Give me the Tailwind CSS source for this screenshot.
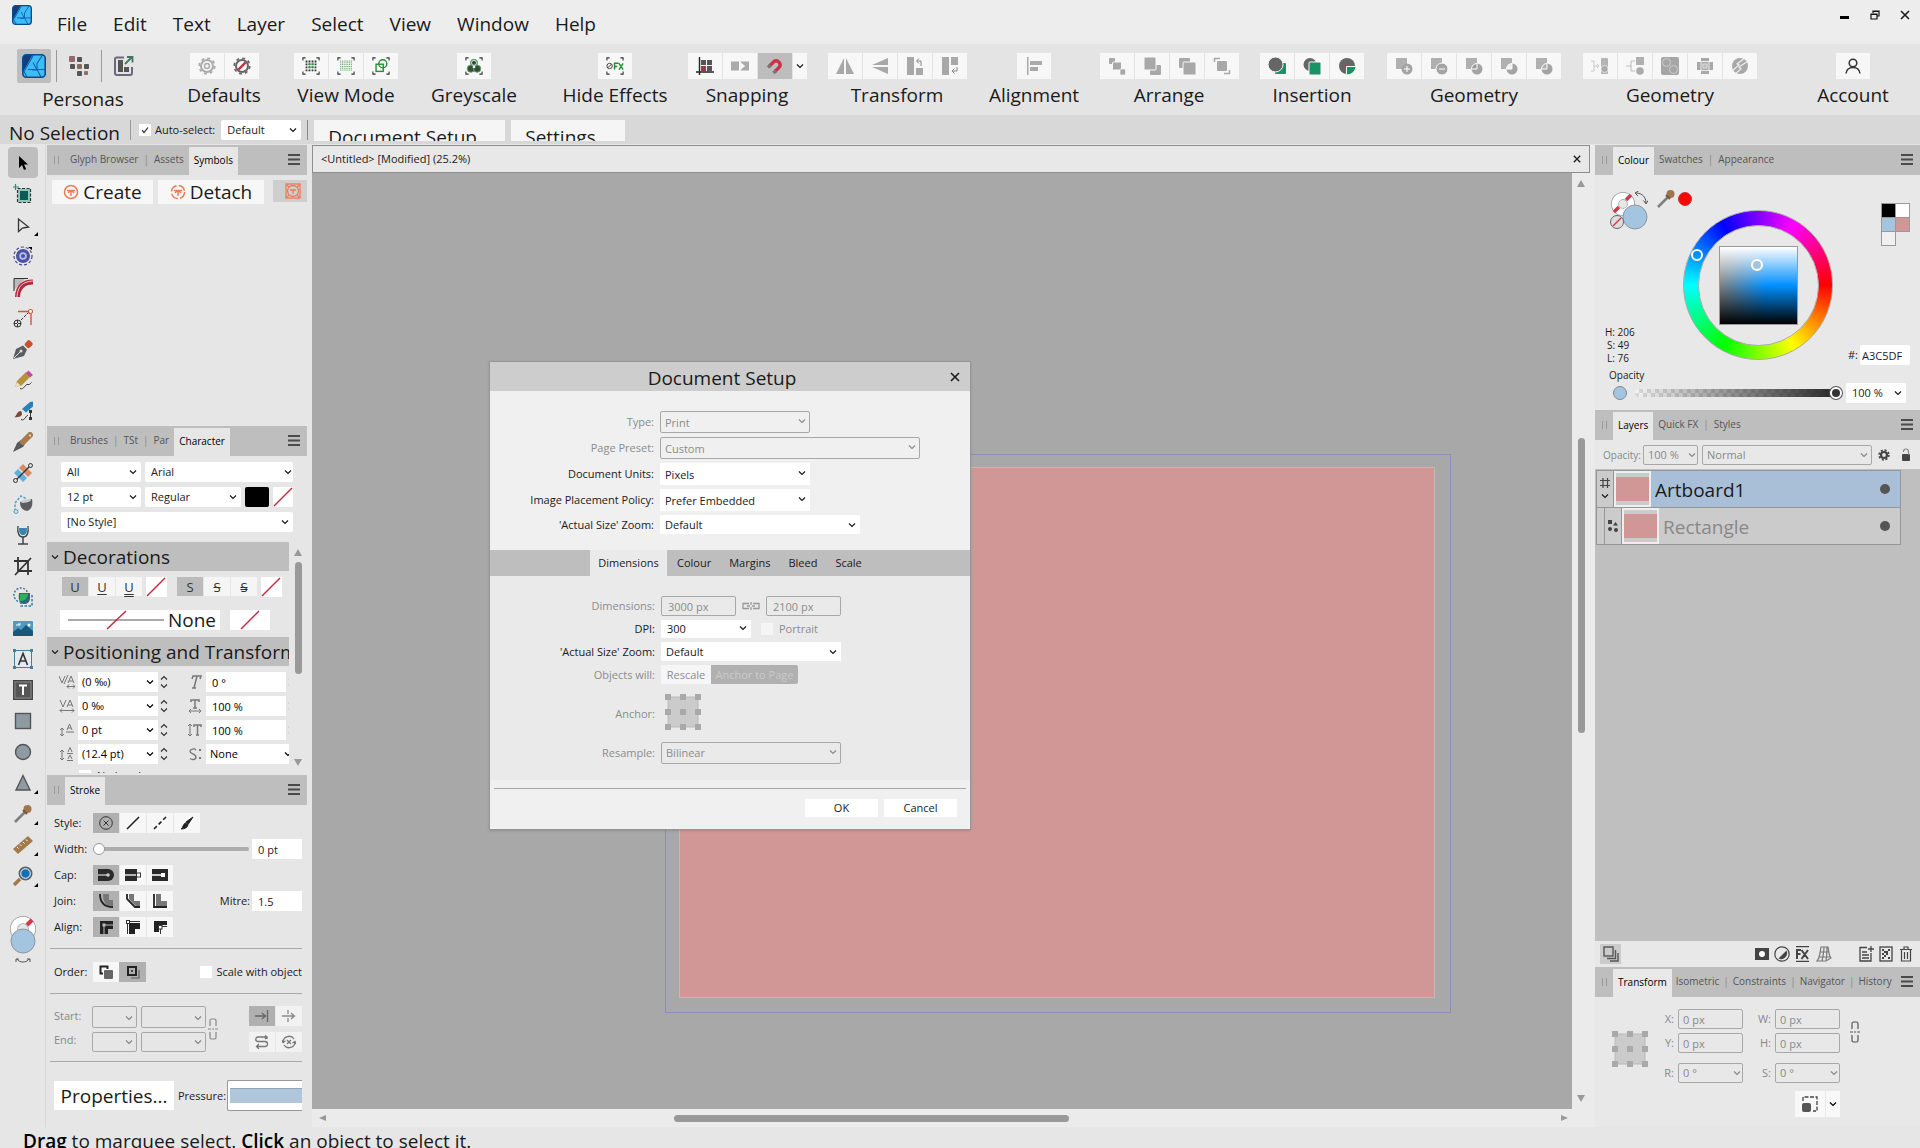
<!DOCTYPE html>
<html lang="en">
<head>
  <meta charset="UTF-8">
  <meta name="viewport" content="width=device-width, initial-scale=1.0">
  <title>Untitled - Designer</title>
  <script src="https://cdn.jsdelivr.net/npm/@tailwindcss/browser@4"></script>
</head>
<body class="h-screen flex flex-col overflow-hidden bg-[#e6e6e6] text-[#1a1a1a] text-[11px] leading-4 whitespace-nowrap font-['Open_Sans','Noto_Sans',sans-serif]">

  <!-- Shared symbols -->
  <svg class="hidden">
    <symbol id="chev" viewBox="0 0 8 8"><path d="M1 2.500l3 3 3-3" fill="none" stroke="currentColor" stroke-width="1.200"/></symbol>
    <symbol id="menu" viewBox="0 0 12 11"><path d="M0 1h12M0 5.500h12M0 10h12" stroke="#4a4a4a" stroke-width="2"/></symbol>
    <symbol id="grip" viewBox="0 0 5 8"><path d="M.5 0v8M4.500 0v8" stroke="#999"/></symbol>
    <symbol id="slash" viewBox="0 0 20 20"><path d="M1 19L19 1" stroke="#c8283c" stroke-width="1.500"/></symbol>
    <symbol id="x" viewBox="0 0 10 10"><path d="M1 1l8 8M9 1L1 9" stroke="currentColor" stroke-width="1.600"/></symbol>
    <symbol id="logo" viewBox="0 0 24 24">
      <rect x=".8" y=".8" width="22.400" height="22.400" rx="3.500" fill="#3dbdf7"/>
      <path d="M1 4a3 3 0 0 1 3-3h6.500L1 18z" fill="#123f7c"/>
      <path d="M11.500 1L2 17.500 5 23M6 15.500h17M11 8.500l4 7.500-5 0M15 15.500V9.500L20.500 1M15 15.500L19 23" fill="none" stroke="#1263ad" stroke-width="1.100"/>
      <rect x=".8" y=".8" width="22.400" height="22.400" rx="3.500" fill="none" stroke="#0b4c90" stroke-width="1.600"/>
    </symbol>
    <symbol id="anchor" viewBox="0 0 36 36">
      <rect x="3" y="3" width="30" height="30" fill="#cbcbcb" stroke="#b9b9b9"/>
      <path d="M0 0h6v6H0zM15 0h6v6h-6zM30 0h6v6h-6zM0 15h6v6H0zM15 15h6v6h-6zM30 15h6v6h-6zM0 30h6v6H0zM15 30h6v6h-6zM30 30h6v6h-6z" fill="#a9a9a9"/>
    </symbol>
    <symbol id="link" viewBox="0 0 10 22"><path d="M2 8V2.500Q2 1 3.500 1h3Q8 1 8 2.500V8M2 14v5.500Q2 21 3.500 21h3Q8 21 8 19.500V14M0 11h3M4 11h2M7 11h3" fill="none" stroke="currentColor" stroke-width="1.200"/></symbol>
    <symbol id="spin" viewBox="0 0 8 14"><path d="M1 4.500l3-3 3 3M1 9.500l3 3 3-3" fill="none" stroke="#333" stroke-width="1.200"/></symbol>
    <symbol id="frame" viewBox="0 0 20 20"><path d="M1 4V1h3M16 1h3v3M19 16v3h-3M4 19H1v-3" fill="none" stroke="#333" stroke-width="1.200"/></symbol>
    <symbol id="dropper" viewBox="0 0 20 20"><path d="M2 18L12 8" stroke="#7d8084" stroke-width="2.600"/><circle cx="14.500" cy="5" r="4" fill="#a0744c"/><path d="M10 6l4 4" stroke="#7b5535" stroke-width="2"/></symbol>
  </svg>

  <!-- Menu bar -->
  <header class="h-11 shrink-0 bg-[#ededed] flex items-start">
    <svg class="size-5 ml-3 mt-[5px]"><use href="#logo"/></svg>
    <nav class="flex ml-[25px] mt-2.5 gap-[26px] text-[19px] leading-7">
      <a href="#file">File</a><a href="#edit">Edit</a><a href="#text">Text</a><a href="#layer">Layer</a><a href="#select">Select</a><a href="#view">View</a><a href="#window">Window</a><a href="#help">Help</a>
    </nav>
    <div class="ml-auto mr-2.5 mt-2.5 flex gap-5">
      <button aria-label="Minimise"><svg class="size-2.5" viewBox="0 0 10 10"><path d="M0 6h9v3H0z"/></svg></button>
      <button aria-label="Restore"><svg class="size-2.5" viewBox="0 0 10 10"><path d="M3 3V1h6v5H7M3 1.500h6M1 4h6v5H1zM1 4.500h6" fill="none" stroke="#111" stroke-width="1.200"/></svg></button>
      <button aria-label="Close"><svg class="size-2.5"><use href="#x"/></svg></button>
    </div>
  </header>

  <!-- Toolbar -->
  <div class="h-[71px] shrink-0 pt-[5px] flex bg-[#e4e4e4] text-[19px] leading-8">
    <section class="w-[166px] flex flex-col items-center">
      <div class="flex items-center h-[34px] gap-[5px] -ml-2">
        <button class="size-[34px] bg-[#bdbdbd] rounded-xs flex items-center justify-center"><svg class="size-6"><use href="#logo"/></svg></button>
        <span class="w-px h-8 bg-[#999]"></span>
        <button class="px-[7px]"><svg class="size-5" viewBox="0 0 20 20"><g fill="#555"><rect x="8" y="1" width="5" height="5" rx="1"/><rect x="1" y="8" width="5" height="5" rx="1"/><rect x="15" y="8" width="5" height="5" rx="1"/><rect x="8" y="15" width="5" height="5" rx="1"/></g><rect x="0" y="0" width="6" height="6" rx="1" fill="#95696b"/><rect x="8" y="8" width="5" height="5" rx="1" fill="#8a6a58"/><rect x="15" y="15" width="4" height="4" rx="1" fill="#8a7460"/></svg></button>
        <span class="w-px h-8 bg-[#999]"></span>
        <button class="px-[7px]"><svg class="size-5" viewBox="0 0 20 20"><path d="M10 1.500H3A2 2 0 0 0 1 4v13a2 2 0 0 0 2 2h13a2 2 0 0 0 2-2v-6" fill="none" stroke="#6b6780" stroke-width="2"/><path d="M4 4h5v12H4zM10 11h5v5h-5z" fill="#555"/><path d="M11 8l7-7M13 1h5.500v5.500" stroke="#3f7561" fill="none" stroke-width="1.800"/></svg></button>
      </div>
      <span>Personas</span>
    </section>

    <section class="w-[116px] flex flex-col items-center pt-1">
      <div class="flex gap-px">
        <button class="w-[34px] h-[26px] bg-[#f7f7f7] flex items-center justify-center"><svg class="size-[18px]" viewBox="0 0 18 18"><circle cx="9" cy="9" r="6" fill="none" stroke="#aaa" stroke-width="2"/><circle cx="9" cy="9" r="2.500" fill="none" stroke="#aaa" stroke-width="1.500"/><circle cx="9" cy="9" r="7.800" fill="none" stroke="#aaa" stroke-width="1.600" stroke-dasharray="3 3.120"/></svg></button>
        <button class="w-[34px] h-[26px] bg-[#f7f7f7] flex items-center justify-center"><svg class="size-[18px]" viewBox="0 0 18 18"><circle cx="9" cy="9" r="6" fill="none" stroke="#666" stroke-width="2"/><circle cx="9" cy="9" r="7.800" fill="none" stroke="#666" stroke-width="1.600" stroke-dasharray="3 3.120"/><path d="M5.500 12.500l7-7" stroke="#c8283c" stroke-width="2.400"/></svg></button>
      </div>
      <span>Defaults</span>
    </section>

    <section class="w-32 flex flex-col items-center pt-1">
      <div class="flex gap-px">
        <button class="w-[34px] h-[26px] bg-[#f7f7f7] flex items-center justify-center"><svg class="size-[18px]" viewBox="0 0 20 20"><use href="#frame"/><path d="M5 4v12M8.300 4v12M11.700 4v12M15 4v12" stroke="#333" stroke-width="2" stroke-dasharray="2 1.300"/><path d="M8.300 7v6M11.700 7v6" stroke="#2e9b3a" stroke-width="2" stroke-dasharray="2 1.300"/></svg></button>
        <button class="w-[34px] h-[26px] bg-[#f7f7f7] flex items-center justify-center"><svg class="size-[18px]" viewBox="0 0 20 20"><use href="#frame"/><path d="M4 4v12M6 4v12M8 4v12M10 4v12M12 4v12M14 4v12M16 4v12" stroke="#3d8a47" stroke-dasharray="1 1"/></svg></button>
        <button class="w-[34px] h-[26px] bg-[#f7f7f7] flex items-center justify-center"><svg class="size-[18px]" viewBox="0 0 20 20"><use href="#frame"/><rect x="4.500" y="8" width="8" height="8" fill="none" stroke="#1f8f2c" stroke-width="1.500"/><circle cx="12" cy="7.500" r="4.500" fill="none" stroke="#1f8f2c" stroke-width="1.500"/></svg></button>
      </div>
      <span>View Mode</span>
    </section>

    <section class="w-32 flex flex-col items-center pt-1">
      <button class="w-[34px] h-[26px] bg-[#f7f7f7] flex items-center justify-center"><svg class="size-[18px]" viewBox="0 0 20 20"><use href="#frame"/><g fill="#3a4a3c" stroke="#4fae58"><circle cx="10" cy="6.500" r="4"/><circle cx="6.500" cy="13" r="4"/><circle cx="13.500" cy="13" r="4"/></g><circle cx="10" cy="6.500" r="2.800" fill="none" stroke="#dfe"/><circle cx="10" cy="11" r="1.500" fill="#dfe"/></svg></button>
      <span>Greyscale</span>
    </section>

    <section class="w-[154px] flex flex-col items-center pt-1">
      <button class="w-[34px] h-[26px] bg-[#f7f7f7] flex items-center justify-center"><svg class="size-[18px]" viewBox="0 0 20 20"><use href="#frame"/><circle cx="4" cy="10" r="3" fill="none" stroke="#333"/><path d="M2 12l4-4" stroke="#333"/><path d="M9.500 14V7H14M9.500 10.500h3M14.500 7l4.500 7M19 7l-4.500 7" fill="none" stroke="#1f8f2c" stroke-width="1.600"/></svg></button>
      <span>Hide Effects</span>
    </section>

    <section class="w-[110px] flex flex-col items-center pt-1">
      <div class="flex gap-px">
        <button class="w-[34px] h-[26px] bg-[#f7f7f7] flex items-center justify-center"><svg class="size-[18px]" viewBox="0 0 18 18"><path d="M5 3h5v5H5zM11 3h5v5h-5zM11 9h5v5h-5z" fill="#555"/><path d="M5 9h5v5H5z" fill="#9a3a44"/><path d="M3.500 0v18M0 15h18" stroke="#222" stroke-width="1.400"/></svg></button>
        <button class="w-[34px] h-[26px] bg-[#f7f7f7] flex items-center justify-center"><svg class="size-[18px]" viewBox="0 0 18 18"><path d="M0 4.500h8v9H0z M9.500 4.500H18v9H9.500l3-4.500z" fill="#aaa"/><path d="M10 6.500L13 9l-3 2.500" fill="none" stroke="#f7f7f7" stroke-width="1.500"/></svg></button>
        <button class="w-[34px] h-[26px] bg-[#bdbdbd] flex items-center justify-center"><svg class="size-[18px]" viewBox="0 0 18 18"><path d="M3.500 9L8 4.500a4 4 0 0 1 5.500 5.500L9 14.500" fill="none" stroke="#d02f48" stroke-width="3.400"/><path d="M2 10.500L4.500 8M7.500 16l2.500-2.500" stroke="#777" stroke-width="3.400"/></svg></button>
        <button class="w-3.5 h-[26px] bg-[#f7f7f7] flex items-center justify-center"><svg class="size-2"><use href="#chev"/></svg></button>
      </div>
      <span>Snapping</span>
    </section>

    <section class="w-[190px] flex flex-col items-center pt-1">
      <div class="flex gap-px">
        <button class="w-[34px] h-[26px] bg-[#f7f7f7] flex items-center justify-center"><svg class="size-[18px]" viewBox="0 0 18 18" fill="#a8a8a8"><path d="M8 1v16H0zM10 1v16h8z"/></svg></button>
        <button class="w-[34px] h-[26px] bg-[#f7f7f7] flex items-center justify-center"><svg class="size-[18px]" viewBox="0 0 18 18" fill="#a8a8a8"><path d="M1 8h16V1zM1 10h16v7z"/></svg></button>
        <button class="w-[34px] h-[26px] bg-[#f7f7f7] flex items-center justify-center"><svg class="size-[18px]" viewBox="0 0 18 18" fill="#a8a8a8"><path d="M1 0h7v18H1zM10 11h7v7h-7z"/><path d="M11 4h4v5M13 1.500L10.500 4 13 6.500" fill="none" stroke="#888"/></svg></button>
        <button class="w-[34px] h-[26px] bg-[#f7f7f7] flex items-center justify-center"><svg class="size-[18px]" viewBox="0 0 18 18" fill="#a8a8a8"><path d="M1 0h7v18H1zM10 0h7v8h-7z"/><path d="M16 10v4h-5M13.500 11.500L11 14l2.500 2.500" fill="none" stroke="#888"/></svg></button>
      </div>
      <span>Transform</span>
    </section>

    <section class="w-[84px] flex flex-col items-center pt-1">
      <button class="w-[34px] h-[26px] bg-[#f7f7f7] flex items-center justify-center"><svg class="size-[18px]" viewBox="0 0 18 18" fill="#aaa"><path d="M2 0h1.500v18H2zM5 4h12v4H5zM5 10h8v4H5z"/></svg></button>
      <span>Alignment</span>
    </section>

    <section class="w-[186px] flex flex-col items-center pt-1">
      <div class="flex gap-px">
        <button class="w-[34px] h-[26px] bg-[#f7f7f7] flex items-center justify-center"><svg class="size-[18px]" viewBox="0 0 18 18" fill="#a8a8a8"><rect x="1" y="1" width="6" height="6" rx="1"/><rect x="4.500" y="5" width="9" height="8" rx="1" stroke="#f7f7f7"/><rect x="12" y="12" width="5.500" height="6" rx="1" stroke="#f7f7f7" stroke-width=".7"/></svg></button>
        <button class="w-[34px] h-[26px] bg-[#f7f7f7] flex items-center justify-center"><svg class="size-[18px]" viewBox="0 0 18 18" fill="#a8a8a8"><rect x="7" y="8" width="11" height="10" rx="1"/><rect x="1" y="0" width="12" height="13" rx="1" stroke="#f7f7f7"/></svg></button>
        <button class="w-[34px] h-[26px] bg-[#f7f7f7] flex items-center justify-center"><svg class="size-[18px]" viewBox="0 0 18 18" fill="#a8a8a8"><rect x="1" y="1" width="11" height="10" rx="1"/><rect x="5" y="5" width="13" height="13" rx="1" stroke="#f7f7f7"/></svg></button>
        <button class="w-[34px] h-[26px] bg-[#f7f7f7] flex items-center justify-center"><svg class="size-[18px]" viewBox="0 0 18 18" fill="#a8a8a8"><rect x="4" y="4" width="10" height="10" rx="1"/><path d="M1.500 5V1.500H7M16.500 13v3.500H11" fill="none" stroke="#a8a8a8" stroke-width="1.500"/></svg></button>
      </div>
      <span>Arrange</span>
    </section>

    <section class="w-[100px] flex flex-col items-center pt-1">
      <div class="flex gap-px">
        <button class="w-[34px] h-[26px] bg-[#f7f7f7] flex items-center justify-center"><svg class="size-[18px]" viewBox="0 0 18 18"><rect x="7" y="6" width="11" height="11" rx="1" fill="#199366"/><circle cx="7.500" cy="7.500" r="7.500" fill="#666" stroke="#f7f7f7"/></svg></button>
        <button class="w-[34px] h-[26px] bg-[#f7f7f7] flex items-center justify-center"><svg class="size-[18px]" viewBox="0 0 18 18"><circle cx="7" cy="7.500" r="6.500" fill="#666"/><rect x="6" y="5" width="12" height="13" rx="1" fill="#199366" stroke="#f7f7f7"/></svg></button>
        <button class="w-[34px] h-[26px] bg-[#f7f7f7] flex items-center justify-center"><svg class="size-[18px]" viewBox="0 0 18 18"><circle cx="9" cy="9" r="8" fill="#666"/><path d="M8.500 18V9.500H18a9 9 0 0 1-9.500 8.500z" fill="#199366" stroke="#f7f7f7"/></svg></button>
      </div>
      <span>Insertion</span>
    </section>

    <section class="w-56 flex flex-col items-center pt-1">
      <div class="flex gap-px">
        <button class="w-[34px] h-[26px] bg-[#f7f7f7] flex items-center justify-center"><svg class="size-[18px]" viewBox="0 0 18 18"><rect x="1" y="1" width="11" height="11" fill="#b0b0b0"/><circle cx="12" cy="12" r="5.500" fill="#a4a4a4"/><path d="M9 12h6M12 9v6" stroke="#fff"/></svg></button>
        <button class="w-[34px] h-[26px] bg-[#f7f7f7] flex items-center justify-center"><svg class="size-[18px]" viewBox="0 0 18 18"><rect x="1" y="1" width="11" height="11" fill="#b0b0b0"/><circle cx="12" cy="12" r="6" fill="#a4a4a4" stroke="#f7f7f7"/><path d="M9 12h6" stroke="#fff"/></svg></button>
        <button class="w-[34px] h-[26px] bg-[#f7f7f7] flex items-center justify-center"><svg class="size-[18px]" viewBox="0 0 18 18"><rect x="1" y="1" width="11" height="11" fill="#b0b0b0"/><circle cx="12" cy="12" r="5.500" fill="#a4a4a4"/><path d="M6.500 12A5.500 5.500 0 0 1 12 6.500V12z" fill="#999" stroke="#fff"/></svg></button>
        <button class="w-[34px] h-[26px] bg-[#f7f7f7] flex items-center justify-center"><svg class="size-[18px]" viewBox="0 0 18 18"><rect x="1" y="1" width="11" height="11" fill="#b0b0b0"/><circle cx="12" cy="12" r="5.500" fill="#a4a4a4"/><path d="M6.500 12A5.500 5.500 0 0 1 12 6.500V12z" fill="#f0f0f0" stroke="#fff"/></svg></button>
        <button class="w-[34px] h-[26px] bg-[#f7f7f7] flex items-center justify-center"><svg class="size-[18px]" viewBox="0 0 18 18"><rect x="1" y="1" width="11" height="11" fill="#b0b0b0"/><circle cx="12" cy="12" r="5.500" fill="#a4a4a4"/><path d="M6.500 12A5.500 5.500 0 0 1 12 6.500V12z" fill="#b0b0b0" stroke="#fff"/></svg></button>
      </div>
      <span>Geometry</span>
    </section>

    <section class="w-[168px] flex flex-col items-center pt-1">
      <div class="flex gap-px">
        <button class="w-[34px] h-[26px] bg-[#f7f7f7] flex items-center justify-center"><svg class="size-[18px]" viewBox="0 0 18 18"><rect x="10" y="1" width="7" height="16" rx="1" fill="#b4b4b4"/><circle cx="13.500" cy="12" r="3.500" fill="#aaa" stroke="#e8e8e8" stroke-width=".8"/><path d="M0 4h3v10H0M3 9h5M6 7l2 2-2 2" fill="none" stroke="#c8c8c8"/></svg></button>
        <button class="w-[34px] h-[26px] bg-[#f7f7f7] flex items-center justify-center"><svg class="size-[18px]" viewBox="0 0 18 18"><rect x="10" y="0" width="8" height="8" fill="#b0b0b0"/><circle cx="14" cy="14" r="3.800" fill="#aaa"/><path d="M9 4H5v10h4M0 9h5" fill="none" stroke="#bbb"/></svg></button>
        <button class="w-[34px] h-[26px] bg-[#f7f7f7] flex items-center justify-center"><svg class="size-[18px]" viewBox="0 0 18 18"><rect width="18" height="18" rx="2" fill="#a6a6a6"/><circle cx="5.500" cy="5.500" r="4" fill="none" stroke="#ccc"/><circle cx="12.500" cy="12.500" r="4" fill="none" stroke="#ccc"/></svg></button>
        <button class="w-[34px] h-[26px] bg-[#f7f7f7] flex items-center justify-center"><svg class="size-[18px]" viewBox="0 0 18 18"><path d="M5 1h8v16H5zM1 5h16v8H1z" fill="#a8a8a8"/><rect x="5" y="4.500" width="8" height="9" fill="none" stroke="#eee"/><rect x="7" y="7" width="4" height="4" fill="#bbb" stroke="#ddd"/></svg></button>
        <button class="w-[34px] h-[26px] bg-[#f7f7f7] flex items-center justify-center"><svg class="size-[18px]" viewBox="0 0 18 18"><circle cx="9" cy="9" r="8" fill="#a8a8a8"/><path d="M1 14l7-6-2-1 8-6M4 17l6-5-2-2 9-6" fill="none" stroke="#eee" stroke-width="1.200"/></svg></button>
      </div>
      <span>Geometry</span>
    </section>

    <section class="flex-1 pl-8 flex flex-col items-center pt-1">
      <button class="w-[34px] h-[26px] bg-[#f7f7f7] flex items-center justify-center"><svg class="size-4" viewBox="0 0 16 16" fill="none" stroke="#333" stroke-width="1.500"><circle cx="8" cy="5" r="3.800"/><path d="M1 15.500c.5-4 3-6 7-6s6.500 2 7 6"/></svg></button>
      <span>Account</span>
    </section>
  </div>

  <!-- Context bar -->
  <div class="h-[29px] shrink-0 bg-[#d8d8d8] flex items-center overflow-hidden">
    <span class="ml-[9px] mt-1.5 w-[121px] text-[19px] leading-7">No Selection</span>
    <span class="w-px h-5 bg-[#9a9a9a]"></span>
    <label class="flex items-center gap-1 ml-2"><span class="relative flex"><input type="checkbox" checked class="appearance-none size-3 bg-white"><svg class="absolute inset-0 size-3 pointer-events-none" viewBox="0 0 12 12"><path d="M3 6l2 2.500L9 3.500" fill="none" stroke="#222" stroke-width="1.200"/></svg></span>Auto-select:</label>
    <div class="relative w-20 ml-1.5"><select aria-label="Auto-select" class="appearance-none w-full h-5 bg-white rounded-xs pl-1.5"><option>Default</option></select><svg class="absolute right-1 top-1.5 size-2 pointer-events-none"><use href="#chev"/></svg></div>
    <span class="w-px h-5 bg-[#888] ml-1.5"></span>
    <button class="ml-1.5 mt-0.5 w-[191px] h-[21px] bg-[#f5f5f5] text-[19px] leading-[34px] pl-3.5 text-left overflow-hidden flex items-start">Document Setup...</button>
    <button class="ml-1.5 mt-0.5 w-[114px] h-[21px] bg-[#f5f5f5] text-[19px] leading-[34px] pl-3.5 text-left overflow-hidden flex items-start">Settings...</button>
  </div>

  <!-- Workspace -->
  <main class="flex-1 min-h-0 flex">

    <!-- Tools -->
    <div class="w-[46px] shrink-0 flex flex-col items-center border-r border-[#d9d9d9] pt-[3px]">
      <button class="w-[30px] h-[31px] flex items-center justify-center bg-[#bebebe] rounded"><svg class="size-5" viewBox="0 0 20 20"><path d="M6 3v12l3-3 2 5 2.200-1-2.200-4.500h4z"/></svg></button>
      <button class="w-[30px] h-[31px] flex items-center justify-center"><svg class="size-5" viewBox="0 0 20 20"><rect x="4.500" y="4.500" width="13" height="14" fill="#8fc7b8" stroke="#333" stroke-width="1.200" stroke-dasharray="3 1.500"/><rect x="7" y="7" width="8" height="9" fill="#0d5a5a"/><path d="M2.500 0v6M0 3h6" stroke="#2c9062" stroke-width="1.200"/></svg></button>
      <button class="relative w-[30px] h-[31px] flex items-center justify-center"><svg class="size-5" viewBox="0 0 20 20"><path d="M5.500 4v12.500l4-3.500 6-1z" fill="none" stroke="#333" stroke-width="1.300"/></svg><svg class="absolute right-0 bottom-1 size-1" viewBox="0 0 4 4"><path d="M4 0v4H0z"/></svg></button>
      <button class="w-[30px] h-[31px] flex items-center justify-center"><svg class="size-5" viewBox="0 0 20 20"><circle cx="10" cy="10" r="9" fill="none" stroke="#4a4a8a" stroke-width="1.200" stroke-dasharray="3 2"/><circle cx="10" cy="10" r="7" fill="#4a52a8"/><circle cx="10" cy="10" r="3.800" fill="#b8bce0"/><circle cx="10" cy="10" r="2" fill="#4a52a8"/><path d="M15 1h4v3z"/></svg></button>
      <button class="w-[30px] h-[31px] flex items-center justify-center"><svg class="size-5" viewBox="0 0 20 20"><path d="M1 13V2h11z" fill="#bbb"/><path d="M1 14V1.500h14" fill="none" stroke="#333"/><path d="M4.500 20C5 10 10 5 20 5" fill="none" stroke="#b02a3c" stroke-width="5"/><path d="M4 20C4.500 9.500 9.500 4.500 20 4" fill="none" stroke="#f2c8cc"/></svg></button>
      <button class="w-[30px] h-[31px] flex items-center justify-center"><svg class="size-5" viewBox="0 0 20 20"><path d="M5 3.500h11M18 6v11" stroke="#d05a38" stroke-width="1.400"/><circle cx="17.500" cy="3.500" r="2" fill="#fff" stroke="#d05a38" stroke-width="1.200"/><circle cx="4.500" cy="15.500" r="3.500" fill="none" stroke="#333"/><path d="M1 15.500h7M4.500 12v7M8 12l7-7" stroke="#333" stroke-dasharray="3 1"/></svg></button>
      <button class="w-[30px] h-[31px] flex items-center justify-center"><svg class="size-5" viewBox="0 0 20 20"><path d="M0 20l3-10 7-3.500 4 4L11 17z" fill="#595d62"/><path d="M1 19l6-6" stroke="#ddd"/><circle cx="8" cy="12" r="1.500" fill="#ddd"/><rect x="12" y="2" width="7" height="6.500" rx="2" transform="rotate(-45 15.500 5)" fill="#c4532f"/></svg></button>
      <button class="w-[30px] h-[31px] flex items-center justify-center"><svg class="size-5" viewBox="0 0 20 20"><path d="M2 17l2-6 9-9 4.500 4.500-9 9z" fill="#b8913a"/><path d="M13 3l2.500-2.500L20 5l-3 2.500z" fill="#bd4ca5"/><path d="M2 17l2-5 3.500 3.500z" fill="#eadfc4"/><path d="M7 18.500c4 2 5-5 8-4 2 .5 2-1 3.500-2" fill="none" stroke="#444"/></svg></button>
      <button class="w-[30px] h-[31px] flex items-center justify-center"><svg class="size-5" viewBox="0 0 20 20"><path d="M9 8l8-7 3-.5v5l-7 6z" fill="#2882b8"/><path d="M1 16c3 0 2-6 7-6 3 4-1 7-7 6z" fill="#7a4a36"/><path d="M8 18.500c4 2 5-5 7-4M17.500 9v10" fill="none" stroke="#333"/><path d="M16 9h3v3h-3zM16 16h3v3h-3z" fill="#333"/></svg></button>
      <button class="w-[30px] h-[31px] flex items-center justify-center"><svg class="size-5" viewBox="0 0 20 20"><path d="M0 20l4-9 4-3 4 4-2 3z" fill="#55585c"/><path d="M10 10l7-7" stroke="#a87a4c" stroke-width="6" stroke-linecap="round"/><circle cx="17" cy="3.500" r="1" fill="#eee"/></svg></button>
      <button class="w-[30px] h-[31px] flex items-center justify-center"><svg class="size-5" viewBox="0 0 20 20"><path d="M10 1l9 9-4 4-9-9z" fill="#d98c66"/><path d="M5 6l9 9-4 4-9-9z" fill="#5fb0dd"/><path d="M3 17L17 3" stroke="#333" stroke-width="1.300"/><circle cx="2.500" cy="17.500" r="2" fill="#ddd" stroke="#333"/><circle cx="17.500" cy="2.500" r="2" fill="#ddd" stroke="#333"/></svg></button>
      <button class="w-[30px] h-[31px] flex items-center justify-center"><svg class="size-5" viewBox="0 0 20 20"><path d="M2 17V9l6-7 6 3" fill="none" stroke="#4fa0d0" stroke-width="1.500" stroke-dasharray="2.500 1.500"/><circle cx="3" cy="17.500" r="2" fill="#ddd" stroke="#4fa0d0"/><path d="M7 8l12-3c1 6 0 10-5 12-5-1-7-4-7-9z" fill="#5a5d60"/><ellipse cx="13" cy="7" rx="5" ry="1.500" fill="#ccc" transform="rotate(-12 13 7)"/></svg></button>
      <button class="w-[30px] h-[31px] flex items-center justify-center"><svg class="size-5" viewBox="0 0 20 20"><path d="M5 1c-1 7 1 11 5 11s6-4 5-11" fill="none" stroke="#444" stroke-width="1.300"/><path d="M6 3h8c0 5-1 7-4 7s-4-2-4-7z" fill="#3786b0"/><path d="M10 12v7M5 19h10" stroke="#444" stroke-width="1.500"/></svg></button>
      <button class="w-[30px] h-[31px] flex items-center justify-center"><svg class="size-5" viewBox="0 0 20 20"><path d="M5 1v14h14M1 5h14v14M2 19L18 2" fill="none" stroke="#333" stroke-width="1.800"/></svg></button>
      <button class="w-[30px] h-[31px] flex items-center justify-center"><svg class="size-5" viewBox="0 0 20 20"><circle cx="8" cy="8" r="7" fill="none" stroke="#387fa0" stroke-width="1.500" stroke-dasharray="2 1.500"/><path d="M19 8v11H8v-4" fill="none" stroke="#387fa0" stroke-width="1.500" stroke-dasharray="2.500 1.500"/><path d="M6 6h11v6a6 6 0 0 1-6 5c-4 0-6-4-5-11z" fill="#2e6674"/><path d="M7 7h8a7 7 0 0 1-8 7z" fill="#27b35a"/></svg></button>
      <button class="w-[30px] h-[31px] flex items-center justify-center"><svg class="size-5" viewBox="0 0 20 20"><rect x="0" y="3" width="20" height="15" rx="1" fill="#4a9cc4"/><path d="M0 14l5-4 3 2 5-5 7 6v4a1 1 0 0 1-1 1H1a1 1 0 0 1-1-1z" fill="#19587a"/><circle cx="16" cy="7" r="1.500" fill="#fff"/><path d="M3 7h4M5 6h3" stroke="#fff"/></svg></button>
      <button class="w-[30px] h-[31px] flex items-center justify-center"><svg class="size-5" viewBox="0 0 20 20"><rect x="1.500" y="1.500" width="17" height="17" fill="#e4eaee" stroke="#4b7d9b"/><path d="M0 0h3v3H0zM17 0h3v3h-3zM0 17h3v3H0zM17 17h3v3h-3z" fill="#4b7d9b"/><path d="M5.500 16L10 4.500 14.500 16M7 12h6" fill="none" stroke="#333" stroke-width="1.600"/></svg></button>
      <button class="w-[30px] h-[31px] flex items-center justify-center"><svg class="size-5" viewBox="0 0 20 20"><rect x=".5" y=".5" width="19" height="19" fill="#555" stroke="#444"/><rect x="2" y="2" width="16" height="16" fill="none" stroke="#888"/><path d="M6 5.500h8M10 5.500V15" stroke="#fff" stroke-width="2"/></svg></button>
      <button class="w-[30px] h-[31px] flex items-center justify-center"><svg class="size-5" viewBox="0 0 20 20"><rect x="2.500" y="2.500" width="15" height="15" fill="#8f9ba3" stroke="#555" stroke-width="1.400"/></svg></button>
      <button class="w-[30px] h-[31px] flex items-center justify-center"><svg class="size-5" viewBox="0 0 20 20"><circle cx="10" cy="10" r="7.500" fill="#8f9ba3" stroke="#555" stroke-width="1.400"/></svg></button>
      <button class="relative w-[30px] h-[31px] flex items-center justify-center"><svg class="size-5" viewBox="0 0 20 20"><path d="M10 2.500L17 17H3z" fill="#8f9ba3" stroke="#555" stroke-width="1.400"/></svg><svg class="absolute right-0 bottom-1 size-1" viewBox="0 0 4 4"><path d="M4 0v4H0z"/></svg></button>
      <button class="relative w-[30px] h-[31px] flex items-center justify-center"><svg class="size-5"><use href="#dropper"/></svg><svg class="absolute right-0 bottom-1 size-1" viewBox="0 0 4 4"><path d="M4 0v4H0z"/></svg></button>
      <button class="relative w-[30px] h-[31px] flex items-center justify-center"><svg class="size-5" viewBox="0 0 20 20"><path d="M0 14L15 1l5 5L5 19z" fill="#a37a4c"/><path d="M4 12l1.500 1.500M7 9.500L8.500 11M10 7l1.500 1.500M13 4.500L14.500 6" stroke="#fff"/></svg><svg class="absolute right-0 bottom-1 size-1" viewBox="0 0 4 4"><path d="M4 0v4H0z"/></svg></button>
      <button class="relative w-[30px] h-[31px] flex items-center justify-center"><svg class="size-5" viewBox="0 0 20 20"><path d="M1 19l6-6" stroke="#a37a4c" stroke-width="3.500"/><circle cx="12.500" cy="7.500" r="6" fill="#1470b4" stroke="#5a6068" stroke-width="2"/><circle cx="12.500" cy="7.500" r="4.800" fill="none" stroke="#fff"/></svg><svg class="absolute right-0 bottom-1 size-1" viewBox="0 0 4 4"><path d="M4 0v4H0z"/></svg></button>
      <svg class="w-7 h-12 mt-6" viewBox="0 0 28 48"><circle cx="14" cy="14" r="9" fill="none" stroke="#999" stroke-width="8"/><circle cx="14" cy="14" r="9" fill="none" stroke="#fff" stroke-width="6.500"/><path d="M18 10l5-5" stroke="#d8364a" stroke-width="4"/><circle cx="14" cy="26" r="12" fill="#a3c5df" stroke="#8a97a3"/><path d="M8 44c2 4 10 4 12 0M7 47v-3h3M18 44h3v3" fill="none" stroke="#555"/></svg>
    </div>

    <!-- Left panels -->
    <aside class="w-[260px] shrink-0 ml-px mr-px mt-px flex flex-col">
      <div class="h-[30px] shrink-0 bg-[#bebebe] flex items-center text-[10px] text-[#555] [&>button]:pb-0.5 [&>span]:pb-0.5">
        <svg class="w-[5px] h-2 ml-[7px] mr-[11px]"><use href="#grip"/></svg>
        <button>Glyph Browser</button><span class="mx-[5px] text-[#888]">|</span><button>Assets</button>
        <button class="self-end h-7 px-[5px] ml-[5px] bg-[#e6e6e6] text-black">Symbols</button>
        <button aria-label="Panel menu" class="ml-auto mr-[7px]"><svg class="w-3 h-[11px]"><use href="#menu"/></svg></button>
      </div>
      <div class="flex-1 min-h-0 pt-[5px] pl-[5px] flex items-start gap-[5px]">
        <button class="w-[101px] h-6 bg-[#f7f7f7] flex items-center justify-center gap-1 text-[19px] leading-6"><svg class="size-4" viewBox="0 0 16 16" fill="none" stroke="#ee7c56" stroke-width="1.500"><circle cx="8" cy="8" r="6.500"/><path d="M4 6.500h8M8 6.500V12M5 9l2-2M11 9L9 7"/></svg>Create</button>
        <button class="w-[106px] h-6 bg-[#f7f7f7] flex items-center justify-center gap-1 text-[19px] leading-6"><svg class="size-4" viewBox="0 0 16 16" fill="none" stroke="#ee7c56" stroke-width="1.500"><circle cx="8" cy="8" r="6.500" stroke-dasharray="8 2.200"/><path d="M4 6.500h8M8 6.500V12M5 9l2-2M11 9L9 7"/></svg>Detach</button>
        <button aria-label="Sync" class="ml-auto w-[34px] h-[22px] bg-[#cecece] flex items-center justify-center pl-1.5"><svg class="size-4" viewBox="0 0 16 16" fill="none" stroke="#ee7c56" stroke-width="1.300"><rect x="1" y="1" width="14" height="14"/><circle cx="8" cy="8" r="5.500"/><path d="M5 7h6M8 7v4M1 1l3 3M15 1l-3 3M1 15l3-3M15 15l-3-3"/></svg></button>
      </div>

      <div class="h-[30px] shrink-0 bg-[#bebebe] flex items-center text-[10px] text-[#555] [&>button]:pb-0.5 [&>span]:pb-0.5">
        <svg class="w-[5px] h-2 ml-[7px] mr-[11px]"><use href="#grip"/></svg>
        <button>Brushes</button><span class="mx-[5px] text-[#888]">|</span><button>TSt</button><span class="mx-[5px] text-[#888]">|</span><button>Par</button>
        <button class="self-end h-7 px-[5px] ml-[5px] bg-[#e6e6e6] text-black">Character</button>
        <button aria-label="Panel menu" class="ml-auto mr-[7px]"><svg class="w-3 h-[11px]"><use href="#menu"/></svg></button>
      </div>
      <div class="shrink-0 pt-1.5 pl-3.5 pr-3.5 flex flex-col gap-[5px]">
        <div class="flex gap-1">
          <div class="relative w-20"><select aria-label="Font filter" class="appearance-none w-full h-5 bg-white rounded-xs pl-1.5"><option>All</option></select><svg class="absolute right-1 top-1.5 size-2 pointer-events-none"><use href="#chev"/></svg></div>
          <div class="relative flex-1"><select aria-label="Font" class="appearance-none w-full h-5 bg-white rounded-xs pl-1.5"><option>Arial</option></select><svg class="absolute right-px top-1.5 size-2 pointer-events-none"><use href="#chev"/></svg></div>
        </div>
        <div class="flex gap-1">
          <div class="relative w-20"><select aria-label="Font size" class="appearance-none w-full h-5 bg-white rounded-xs pl-1.5"><option>12 pt</option></select><svg class="absolute right-1 top-1.5 size-2 pointer-events-none"><use href="#chev"/></svg></div>
          <div class="relative flex-1"><select aria-label="Weight" class="appearance-none w-full h-5 bg-white rounded-xs pl-1.5"><option>Regular</option></select><svg class="absolute right-1 top-1.5 size-2 pointer-events-none"><use href="#chev"/></svg></div>
          <button aria-label="Text colour" class="w-6 h-5 bg-black rounded-xs"></button>
          <button aria-label="Text background" class="w-5 h-5 bg-white"><svg class="size-5"><use href="#slash"/></svg></button>
        </div>
        <div class="relative"><select aria-label="Text style" class="appearance-none w-full h-5 bg-white rounded-xs pl-1.5"><option>[No Style]</option></select><svg class="absolute right-1 top-1.5 size-2 pointer-events-none"><use href="#chev"/></svg></div>
      </div>
      <div class="h-[231px] shrink-0 mt-2.5 mb-0.5 flex overflow-hidden">
        <div class="w-[242px] overflow-hidden">
          <h2 class="h-[29px] bg-[#bebebe] flex items-center text-[19px] leading-7 overflow-hidden"><svg class="size-2 mx-1 shrink-0"><use href="#chev"/></svg>Decorations</h2>
          <div class="flex items-center h-[19px] mt-1.5 pl-[15px] gap-px text-[13px] text-[#333]">
            <button class="w-[26px] h-[19px] bg-[#bbb] leading-4">U</button>
            <button class="w-[26px] h-[19px] bg-[#f5f5f5] leading-4 underline underline-offset-2">U</button>
            <button class="w-[26px] h-[19px] bg-[#f5f5f5] leading-4 underline decoration-double underline-offset-2">U</button>
            <button aria-label="Underline colour" class="w-[21px] h-5 bg-white ml-[3px]"><svg class="size-5"><use href="#slash"/></svg></button>
            <button class="w-[26px] h-[19px] bg-[#bbb] leading-4 ml-[9px]">S</button>
            <button class="w-[26px] h-[19px] bg-[#f5f5f5] leading-4 line-through">S</button>
            <button class="w-[26px] h-[19px] bg-[#f5f5f5] leading-4 line-through decoration-double">S</button>
            <button aria-label="Strikethrough colour" class="w-[21px] h-5 bg-white ml-[3px]"><svg class="size-5"><use href="#slash"/></svg></button>
          </div>
          <div class="flex mt-3.5 pl-[13px] gap-2.5">
            <button class="w-40 h-5 bg-white flex items-center justify-end pr-1 gap-1 text-[19px] leading-5"><svg class="w-24 h-5" viewBox="0 0 96 20"><path d="M0 10h96" stroke="#555"/><path d="M39 19L58 1" stroke="#c8283c" stroke-width="1.500"/></svg>None</button>
            <button aria-label="Fill" class="w-10 h-5 bg-white flex justify-center"><svg class="size-5"><use href="#slash"/></svg></button>
          </div>
          <h2 class="h-[29px] mt-[7px] bg-[#bebebe] flex items-center text-[19px] leading-7 overflow-hidden"><svg class="size-2 mx-1 shrink-0"><use href="#chev"/></svg>Positioning and Transform</h2>
          <div class="mt-1.5 pl-3 grid grid-cols-[19px_80px_14px_16px_14px_84px_14px] gap-y-1 items-center text-[#777] text-[11px]">
            <svg class="w-4 h-3.5" viewBox="0 0 16 14" fill="none" stroke="#777"><path d="M0 1l3 7 3-7M5 9l4-9M9 8l3-7 3 7M10 6h4M8 11.500h8M10 9.500l-2 2 2 2M14 9.500l2 2-2 2"/></svg><div class="relative text-black"><select aria-label="Kerning" class="appearance-none w-full h-5 bg-white pl-1"><option>(0 ‰)</option></select><svg class="absolute right-1 top-1.5 size-2 pointer-events-none"><use href="#chev"/></svg></div><svg class="w-2 h-3.5 ml-0.5"><use href="#spin"/></svg><i></i><svg class="w-3.5 h-3.5" viewBox="0 0 14 14" fill="none" stroke="#777"><path d="M4 4l1-3h8l-1 3M9 1L6 13M4 13h4" stroke-width="1.500"/></svg><input aria-label="Shear" value="0 °" class="ml-1 w-20 h-5 bg-white pl-1.5 text-black"><svg class="w-2 h-3.5 ml-0.5"><use href="#spin"/></svg>
            <svg class="w-4 h-3.5" viewBox="0 0 16 14" fill="none" stroke="#777"><path d="M1 1l3 7 3-7M8 8l3-7 3 7M9 6h4M1 11.500h14M3 9.500l-2 2 2 2M13 9.500l2 2-2 2"/></svg><div class="relative text-black"><select aria-label="Tracking" class="appearance-none w-full h-5 bg-white pl-1"><option>0 ‰</option></select><svg class="absolute right-1 top-1.5 size-2 pointer-events-none"><use href="#chev"/></svg></div><svg class="w-2 h-3.5 ml-0.5"><use href="#spin"/></svg><i></i><svg class="w-3.5 h-3.5" viewBox="0 0 14 14" fill="none" stroke="#777"><path d="M3 3V1h8v2M7 1v8M5 9h4" stroke-width="1.500"/><path d="M1 12h12M3 10l-2 2 2 2M11 10l2 2-2 2"/></svg><input aria-label="Horizontal scale" value="100 %" class="ml-1 w-20 h-5 bg-white pl-1.5 text-black"><svg class="w-2 h-3.5 ml-0.5"><use href="#spin"/></svg>
            <svg class="w-4 h-3.5" viewBox="0 0 16 14" fill="none" stroke="#777"><path d="M3 5v8M1 7l2-2 2 2M1 11l2 2 2-2M7 9h8M8 7l2.500-6L13 7M9 5h3"/></svg><div class="relative text-black"><select aria-label="Baseline" class="appearance-none w-full h-5 bg-white pl-1"><option>0 pt</option></select><svg class="absolute right-1 top-1.5 size-2 pointer-events-none"><use href="#chev"/></svg></div><svg class="w-2 h-3.5 ml-0.5"><use href="#spin"/></svg><i></i><svg class="w-3.5 h-3.5" viewBox="0 0 14 14" fill="none" stroke="#777"><path d="M6 4V2h7v2M9.500 2v10M8 12h3" stroke-width="1.500"/><path d="M2 1v12M0 3l2-2 2 2M0 11l2 2 2-2"/></svg><input aria-label="Vertical scale" value="100 %" class="ml-1 w-20 h-5 bg-white pl-1.5 text-black"><svg class="w-2 h-3.5 ml-0.5"><use href="#spin"/></svg>
            <svg class="w-4 h-3.5" viewBox="0 0 16 14" fill="none" stroke="#777"><path d="M3 3v10M1 5l2-2 2 2M1 11l2 2 2-2M8 6.500h6M8 13.500h6M9 5l2-4.500L13 5M9 12l2-4 2 4"/></svg><div class="relative text-black"><select aria-label="Leading" class="appearance-none w-full h-5 bg-white pl-1"><option>(12.4 pt)</option></select><svg class="absolute right-1 top-1.5 size-2 pointer-events-none"><use href="#chev"/></svg></div><svg class="w-2 h-3.5 ml-0.5"><use href="#spin"/></svg><i></i><svg class="w-3.5 h-3.5" viewBox="0 0 14 14" fill="none" stroke="#777"><path d="M8 3C6 1 2 2 2 4.500S8 7 8 10s-4 3-6 1.500" stroke-width="1.400"/><path d="M11 2h2v2h-2zM11 10h2v2h-2z" fill="#777" stroke="none"/></svg><div class="relative text-black ml-1 w-[88px]"><select aria-label="Script" class="appearance-none w-full h-5 bg-white pl-1"><option>None</option></select><svg class="absolute right-0.5 top-1.5 size-2 pointer-events-none"><use href="#chev"/></svg></div><i></i>
          </div>
          <label class="flex items-center gap-1.5 mt-1 ml-8"><input type="checkbox" class="appearance-none size-3 bg-white">No break</label>
        </div>
        <div class="w-[18px] flex flex-col items-center pt-1.5 pb-1.5 gap-1.5">
          <svg class="w-2 h-2" viewBox="0 0 8 8"><path d="M4 1l4 7H0z" fill="#999"/></svg>
          <span class="w-[7px] h-28 rounded-full bg-[#999]"></span>
          <svg class="w-2 h-2 mt-auto" viewBox="0 0 8 8"><path d="M0 0h8L4 7z" fill="#999"/></svg>
        </div>
      </div>

      <div class="h-[30px] shrink-0 bg-[#bebebe] flex items-center text-[10px] [&>button]:pb-0.5">
        <svg class="w-[5px] h-2 ml-[7px] mr-1.5"><use href="#grip"/></svg>
        <button class="self-end h-7 px-[5px] bg-[#e6e6e6] text-black">Stroke</button>
        <button aria-label="Panel menu" class="ml-auto mr-[7px]"><svg class="w-3 h-[11px]"><use href="#menu"/></svg></button>
      </div>
      <div class="shrink-0 pl-[7px] pr-[5px] pt-2 flex flex-col gap-1.5">
        <div class="flex items-center h-5"><span class="w-[39px]">Style:</span>
          <div class="flex gap-px">
            <button aria-label="No line" class="w-[26px] h-5 bg-[#b0b0b0] flex items-center justify-center"><svg class="size-3.5" viewBox="0 0 14 14" fill="none" stroke="#333"><circle cx="7" cy="7" r="6.300"/><path d="M4.500 4.500l5 5M9.500 4.500l-5 5"/></svg></button>
            <button aria-label="Solid" class="w-[26px] h-5 bg-[#f7f7f7] flex items-center justify-center"><svg class="size-3.5" viewBox="0 0 14 14"><path d="M1 13L13 1" stroke="#222" stroke-width="1.600"/></svg></button>
            <button aria-label="Dash" class="w-[26px] h-5 bg-[#f7f7f7] flex items-center justify-center"><svg class="size-3.5" viewBox="0 0 14 14"><path d="M1 13L13 1" stroke="#222" stroke-width="1.600" stroke-dasharray="4 2.500"/></svg></button>
            <button aria-label="Brush" class="w-[26px] h-5 bg-[#f7f7f7] flex items-center justify-center"><svg class="size-3.5" viewBox="0 0 14 14"><path d="M13 1L6 6l2 2.500zM5.500 7L8 9c-1 3-4 4-7 4 2-1 2-5 4.500-6z" fill="#222" stroke="#222"/></svg></button>
          </div>
        </div>
        <div class="flex items-center h-5"><label for="strokeWidth" class="w-[39px]">Width:</label><input id="strokeWidth" type="range" value="0" class="appearance-none w-[156px] h-1 rounded-full bg-[#adadad] [&::-webkit-slider-thumb]:appearance-none [&::-webkit-slider-thumb]:size-3 [&::-webkit-slider-thumb]:rounded-full [&::-webkit-slider-thumb]:bg-white [&::-webkit-slider-thumb]:border [&::-webkit-slider-thumb]:border-[#999]"><input aria-label="Width value" value="0 pt" class="ml-auto w-[50px] h-5 bg-white pl-1.5"></div>
        <div class="flex items-center h-5"><span class="w-[39px]">Cap:</span>
          <div class="flex gap-px">
            <button aria-label="Round cap" class="w-[26px] h-5 bg-[#b0b0b0] flex items-center justify-center"><svg class="w-4 h-3" viewBox="0 0 16 12"><path d="M0 0h10a6 6 0 0 1 0 12H0z" fill="#2a2a2a"/><path d="M0 6h9" stroke="#ccc" stroke-width="1.300"/><circle cx="10" cy="6" r="1.800" fill="#ccc"/></svg></button>
            <button aria-label="Butt cap" class="w-[26px] h-5 bg-[#f7f7f7] flex items-center justify-center"><svg class="w-4 h-3" viewBox="0 0 16 12"><path d="M0 0h12v12H0z" fill="#2a2a2a"/><path d="M0 6h12" stroke="#fff" stroke-width="1.300"/><rect x="11.500" y="4" width="4" height="4" fill="#fff" stroke="#333"/></svg></button>
            <button aria-label="Square cap" class="w-[26px] h-5 bg-[#f7f7f7] flex items-center justify-center"><svg class="w-4 h-3" viewBox="0 0 16 12"><path d="M0 0h16v12H0z" fill="#2a2a2a"/><path d="M0 6h9M9 6h3" stroke="#fff" stroke-width="1.300"/><path d="M9 4h4v4H9z" fill="#fff"/></svg></button>
          </div>
        </div>
        <div class="flex items-center h-5"><span class="w-[39px]">Join:</span>
          <div class="flex gap-px">
            <button aria-label="Round join" class="w-[26px] h-5 bg-[#b0b0b0] flex items-center justify-center"><svg class="size-3.5" viewBox="0 0 14 14"><path d="M4 0h6v6h4v6C7 12 4 9 4 0z" fill="#777"/><path d="M1 0c0 9 4 13 13 13" fill="none" stroke="#222" stroke-width="1.800"/></svg></button>
            <button aria-label="Bevel join" class="w-[26px] h-5 bg-[#f7f7f7] flex items-center justify-center"><svg class="size-3.5" viewBox="0 0 14 14"><path d="M3 0h5v7h6v5h-4L3 5z" fill="#777"/><path d="M1 0v5l8 8h5" fill="none" stroke="#222" stroke-width="1.800"/></svg></button>
            <button aria-label="Mitre join" class="w-[26px] h-5 bg-[#f7f7f7] flex items-center justify-center"><svg class="size-3.5" viewBox="0 0 14 14"><path d="M3 0h5v7h6v5H3z" fill="#777"/><path d="M1 0v13h13" fill="none" stroke="#222" stroke-width="1.800"/></svg></button>
          </div>
          <label class="ml-auto flex items-center gap-0.5">Mitre:<input value="1.5" class="w-[50px] h-5 bg-white pl-1.5"></label>
        </div>
        <div class="flex items-center h-5"><span class="w-[39px]">Align:</span>
          <div class="flex gap-px">
            <button aria-label="Align centre" class="w-[26px] h-5 bg-[#b0b0b0] flex items-center justify-center"><svg class="size-3.5" viewBox="0 0 14 14"><path d="M1 14V1h13v8H9v5z" fill="#222"/><path d="M5 14V5h9" fill="none" stroke="#bbb"/><rect x="3.500" y="3.500" width="3" height="3" fill="#bbb"/></svg></button>
            <button aria-label="Align outside" class="w-[26px] h-5 bg-[#f7f7f7] flex items-center justify-center"><svg class="size-3.5" viewBox="0 0 14 14"><path d="M3 14V3h11v6H9v5z" fill="#222"/><path d="M1.500 14V1.500H14" fill="none" stroke="#333"/><rect x=".5" y=".5" width="3" height="3" fill="#fff" stroke="#333"/></svg></button>
            <button aria-label="Align inside" class="w-[26px] h-5 bg-[#f7f7f7] flex items-center justify-center"><svg class="size-3.5" viewBox="0 0 14 14"><path d="M1 12V1h13v4H6v7z" fill="#222"/><path d="M7.500 14V6.500H14" fill="none" stroke="#333"/><rect x="5.500" y="5.500" width="3.500" height="3.500" fill="#fff" stroke="#333"/></svg></button>
          </div>
        </div>
        <hr class="mt-[5px] -ml-1 border-[#a8a8a8]">
        <div class="flex items-center h-5 mt-[7px]"><span class="w-[39px]">Order:</span>
          <div class="flex">
            <button aria-label="Behind" class="w-[26px] h-5 bg-[#f7f7f7] flex items-center justify-center"><svg class="size-3.5" viewBox="0 0 14 14"><path d="M4 8.500H1.500v-7h7V4" fill="none" stroke="#222" stroke-width="2"/><rect x="5" y="5" width="9" height="9" rx="1" fill="#666"/></svg></button>
            <button aria-label="In front" class="w-[27px] h-5 bg-[#b0b0b0] flex items-center justify-center"><svg class="size-3.5" viewBox="0 0 14 14"><rect x="2" y="2" width="8" height="8" fill="none" stroke="#222" stroke-width="2"/><path d="M5 5h2v2H5z" fill="#444"/><path d="M13 5v8H5" fill="none" stroke="#777" stroke-width="1.600"/></svg></button>
          </div>
          <label class="ml-auto flex items-center gap-1"><input type="checkbox" class="appearance-none size-3 bg-white">Scale with object</label>
        </div>
        <hr class="mt-[5px] -ml-1 border-[#a8a8a8]">
        <div class="flex items-center mt-1.5 text-[#888]">
          <div class="grid grid-cols-[34px_45px_65px] gap-x-1 gap-y-1">
            <span class="pt-0.5">Start:</span>
            <div class="relative"><select aria-label="Start arrow" class="appearance-none w-full h-[22px] border border-[#a8a8a8] rounded-xs"><option></option></select><svg class="absolute right-1 top-2 size-2 pointer-events-none"><use href="#chev"/></svg></div>
            <div class="relative"><select aria-label="Start size" class="appearance-none w-full h-[22px] border border-[#a8a8a8] rounded-xs"><option></option></select><svg class="absolute right-1 top-2 size-2 pointer-events-none"><use href="#chev"/></svg></div>
            <span>End:</span>
            <div class="relative"><select aria-label="End arrow" class="appearance-none w-full h-5 border border-[#a8a8a8] rounded-xs"><option></option></select><svg class="absolute right-1 top-1.5 size-2 pointer-events-none"><use href="#chev"/></svg></div>
            <div class="relative"><select aria-label="End size" class="appearance-none w-full h-5 border border-[#a8a8a8] rounded-xs"><option></option></select><svg class="absolute right-1 top-1.5 size-2 pointer-events-none"><use href="#chev"/></svg></div>
          </div>
          <svg class="w-2.5 h-[22px] ml-0.5"><use href="#link"/></svg>
          <div class="ml-auto grid grid-cols-2 gap-x-px gap-y-1.5">
            <button aria-label="Arrow at end" class="w-[26px] h-5 bg-[#b0b0b0] flex items-center justify-center"><svg class="w-3.5 h-3" viewBox="0 0 14 12" fill="none" stroke="#666" stroke-width="1.300"><path d="M0 6h10M7 3l3.500 3L7 9M12.500 0v12"/></svg></button>
            <button aria-label="Arrow over end" class="w-[26px] h-5 bg-[#f2f2f2] flex items-center justify-center"><svg class="w-3.5 h-3" viewBox="0 0 14 12" fill="none" stroke="#888" stroke-width="1.300"><path d="M0 6h12M9 3l3.500 3L9 9M6 0v4M6 8v4"/></svg></button>
            <button aria-label="Swap" class="w-[26px] h-5 bg-[#f2f2f2] flex items-center justify-center"><svg class="size-3.5" viewBox="0 0 14 14" fill="none" stroke="#777" stroke-width="1.300"><path d="M12 4V2H3a2 2 0 0 0 0 4.500h7a2 2 0 0 1 0 5H2M4 9l-2.500 2.500L4 14M10 .5L12 2l-2 2"/></svg></button>
            <button aria-label="Reset" class="w-[26px] h-5 bg-[#f2f2f2] flex items-center justify-center"><svg class="size-3.5" viewBox="0 0 14 14" fill="none" stroke="#777" stroke-width="1.300"><path d="M1 7a6 6 0 0 1 11-3M13 7a6 6 0 0 1-11 3M5 5l4 4M9 5L5 9M0 5l1 2.500L3.500 6M14 9l-1-2.500L10.500 8"/></svg></button>
          </div>
        </div>
        <hr class="mt-[3px] -ml-1 border-[#a8a8a8]">
        <div class="flex items-center mt-3 mb-4 overflow-hidden">
          <button class="w-[120px] h-[29px] bg-white text-[19px] leading-7">Properties...</button>
          <span class="ml-1">Pressure:</span>
          <button aria-label="Pressure profile" class="ml-px flex-1 h-[31px] bg-white border border-r-0 border-[#999] rounded-l-xs flex items-center pl-0.5"><span class="w-full h-[15px] bg-[#b0c6da] border-t border-[#8fa5ba]"></span></button>
        </div>
      </div>
    </aside>

    <!-- Document view -->
    <div class="flex-1 min-w-0 ml-1 mt-px flex flex-col bg-[#ebebeb]">
      <div class="h-7 shrink-0 border border-[#8e8e8e] bg-[#e8e8e8] flex items-center pl-2 pr-2 mr-[5px]"><span>&lt;Untitled&gt; [Modified] (25.2%)</span><button aria-label="Close tab" class="ml-auto"><svg class="size-2"><use href="#x"/></svg></button></div>
      <div class="flex-1 min-h-0 flex mr-[5px]">
        <div class="relative flex-1 bg-[#a8a8a8]">
          <!-- Artboard with bleed outline -->
          <div class="absolute left-[353px] top-[281px] w-[786px] h-[559px] border border-[#8d8db8]"></div>
          <div class="absolute left-[367px] top-[294px] w-[756px] h-[531px] border border-[#bcbcb0] bg-[#d19797]"></div>

          <!-- Document Setup dialog -->
          <div role="dialog" class="absolute left-[177px] top-[188px] w-[482px] border border-[#969696] bg-[#f0f0f0] shadow-sm">
            <div class="h-[29px] bg-[#cdcdcd] flex items-center pr-2.5"><h1 class="flex-1 text-center text-[19px] leading-7 pl-1 pt-0.5">Document Setup</h1><button aria-label="Close dialog"><svg class="size-2.5"><use href="#x"/></svg></button></div>
            <div class="pt-5 pb-4 grid grid-cols-[164px_auto] gap-x-1.5 gap-y-1 items-center justify-start">
              <label for="type" class="text-right text-[#8c8c8c]">Type:</label>
              <div class="relative w-[150px] text-[#8c8c8c]"><select id="type" class="appearance-none w-full h-[22px] border border-[#a8a8a8] rounded-xs pl-1 pt-0.5"><option>Print</option></select><svg class="absolute right-1 top-1.5 size-2 pointer-events-none"><use href="#chev"/></svg></div>
              <label for="preset" class="text-right text-[#8c8c8c]">Page Preset:</label>
              <div class="relative w-[260px] text-[#8c8c8c]"><select id="preset" class="appearance-none w-full h-[22px] border border-[#a8a8a8] rounded-xs pl-1 pt-0.5"><option>Custom</option></select><svg class="absolute right-1 top-1.5 size-2 pointer-events-none"><use href="#chev"/></svg></div>
              <label for="units" class="text-right">Document Units:</label>
              <div class="relative w-[150px]"><select id="units" class="appearance-none w-full h-[22px] bg-white pl-[5px] pt-0.5"><option>Pixels</option></select><svg class="absolute right-1 top-1.5 size-2 pointer-events-none"><use href="#chev"/></svg></div>
              <label for="policy" class="text-right">Image Placement Policy:</label>
              <div class="relative w-[150px]"><select id="policy" class="appearance-none w-full h-[22px] bg-white pl-[5px] pt-0.5"><option>Prefer Embedded</option></select><svg class="absolute right-1 top-1.5 size-2 pointer-events-none"><use href="#chev"/></svg></div>
              <label for="zoom1" class="text-right">'Actual Size' Zoom:</label>
              <div class="relative w-[200px]"><select id="zoom1" class="appearance-none w-full h-[19px] bg-white pl-[5px]"><option>Default</option></select><svg class="absolute right-1 top-1.5 size-2 pointer-events-none"><use href="#chev"/></svg></div>
            </div>
            <div class="h-[26px] bg-[#bebebe] flex pl-[100px]">
              <button class="w-[77px] bg-[#eaeaea]">Dimensions</button><button class="ml-2.5">Colour</button><button class="ml-[18px]">Margins</button><button class="ml-[18px]">Bleed</button><button class="ml-[18px]">Scale</button>
            </div>
            <div class="bg-[#eaeaea] pt-5 pb-4 grid grid-cols-[165px_auto] gap-x-1.5 gap-y-1 items-center justify-start">
              <label for="dimW" class="text-right text-[#8c8c8c]">Dimensions:</label>
              <div class="flex items-center gap-1.5 text-[#8c8c8c]"><input id="dimW" value="3000 px" class="w-[75px] h-5 border border-[#a8a8a8] rounded-xs pl-1.5"><svg class="w-[18px] h-2" viewBox="0 0 18 8"><path d="M7 1.500H1v5h6M11 1.500h6v5h-6M9 0v3M9 5v3M5 4h3M10 4h3" fill="none" stroke="#999" stroke-width="1.300"/></svg><input aria-label="Height" value="2100 px" class="w-[75px] h-5 border border-[#a8a8a8] rounded-xs pl-1.5"></div>
              <label for="dpi" class="text-right">DPI:</label>
              <div class="flex items-center"><div class="relative w-[90px]"><select id="dpi" class="appearance-none w-full h-[18px] bg-white pl-1.5"><option>300</option></select><svg class="absolute right-1 top-1 size-2 pointer-events-none"><use href="#chev"/></svg></div><label class="ml-2.5 flex items-center gap-1.5 text-[#8c8c8c]"><input type="checkbox" class="appearance-none size-3 bg-[#f5f5f5]">Portrait</label></div>
              <label for="zoom2" class="text-right">'Actual Size' Zoom:</label>
              <div class="relative w-[180px]"><select id="zoom2" class="appearance-none w-full h-[19px] bg-white pl-[5px]"><option>Default</option></select><svg class="absolute right-1 top-1.5 size-2 pointer-events-none"><use href="#chev"/></svg></div>
              <span class="text-right text-[#8c8c8c]">Objects will:</span>
              <div class="flex text-[#8c8c8c]"><button class="w-[50px] h-[19px] bg-[#f6f6f6]">Rescale</button><button class="w-[87px] h-[19px] bg-[#b0b0b0] text-[#cbcbcb] rounded-r-xs">Anchor to Page</button></div>
              <span class="text-right text-[#8c8c8c] pt-0.5">Anchor:</span>
              <svg class="size-9 ml-1 mt-1.5 mb-2"><use href="#anchor"/></svg>
              <label for="resample" class="text-right text-[#8c8c8c]">Resample:</label>
              <div class="relative w-[180px] text-[#8c8c8c]"><select id="resample" class="appearance-none w-full h-[22px] border border-[#a8a8a8] rounded-xs pl-1"><option>Bilinear</option></select><svg class="absolute right-1 top-1.5 size-2 pointer-events-none"><use href="#chev"/></svg></div>
            </div>
            <hr class="mx-1 mt-2 border-[#a8a8a8]">
            <div class="flex justify-end gap-1.5 pt-2.5 pb-3 pr-[13px]"><button class="w-[73px] h-[18px] bg-white">OK</button><button class="w-[73px] h-[18px] bg-white">Cancel</button></div>
          </div>
        </div>
        <div class="w-[18px] shrink-0 flex flex-col items-center justify-between py-1.5">
          <svg class="size-2" viewBox="0 0 8 8"><path d="M4 1l4 7H0z" fill="#999"/></svg>
          <span class="w-[7px] h-[295px] -mt-28 rounded-full bg-[#999]"></span>
          <svg class="size-2" viewBox="0 0 8 8"><path d="M0 0h8L4 7z" fill="#999"/></svg>
        </div>
      </div>
      <div class="h-[18px] shrink-0 flex items-center justify-between pl-1.5 pr-[26px]">
        <svg class="size-2" viewBox="0 0 8 8"><path d="M8 1v6L1 4z" fill="#999"/></svg>
        <span class="w-[395px] h-[7px] -ml-36 rounded-full bg-[#999]"></span>
        <svg class="size-2" viewBox="0 0 8 8"><path d="M0 1v6l7-3z" fill="#999"/></svg>
      </div>
    </div>

    <!-- Right panels -->
    <aside class="w-[325px] shrink-0 mt-px flex flex-col">
      <div class="h-[30px] shrink-0 bg-[#bebebe] flex items-center text-[10px] text-[#555] [&>button]:pb-0.5 [&>span]:pb-0.5">
        <svg class="w-[5px] h-2 ml-[7px] mr-1.5"><use href="#grip"/></svg>
        <button class="self-end h-7 px-[5px] mr-[5px] bg-[#e8e8e8] text-black">Colour</button>
        <button>Swatches</button><span class="mx-[5px] text-[#888]">|</span><button>Appearance</button>
        <button aria-label="Panel menu" class="ml-auto mr-[7px]"><svg class="w-3 h-[11px]"><use href="#menu"/></svg></button>
      </div>
      <div class="relative h-[235px] shrink-0 bg-[#e8e8e8]">
        <div class="flex items-start pt-4 pl-[15px] gap-2">
          <svg class="w-[38px] h-10" viewBox="0 0 38 40"><circle cx="13" cy="13" r="8" fill="none" stroke="#999" stroke-width="8"/><circle cx="13" cy="13" r="8" fill="none" stroke="#fff" stroke-width="6.500"/><path d="M16 9l5-5M4 21l5-5" stroke="#d8364a" stroke-width="3.500"/><circle cx="25" cy="26" r="12" fill="#a3c5df" stroke="#8a97a3"/><circle cx="7" cy="31" r="6.500" fill="#ddd" stroke="#666"/><path d="M3 35l8-8" stroke="#d8364a" stroke-width="1.500"/><path d="M26 2c6 0 10 4 10 10M28.500 0L25 2l3 3M33.500 9.500L36 13l2-3.500" fill="none" stroke="#555"/></svg>
          <div class="flex items-center -mt-0.5"><svg class="size-5"><use href="#dropper"/></svg><span class="size-3.5 ml-0.5 rounded-full bg-[#fb0505] border border-[#c33]"></span></div>
        </div>
        <div class="absolute left-[88px] top-[35px] size-[150px] rounded-full border border-[#aaa] bg-[conic-gradient(from_90deg,red,yellow,lime,cyan,blue,magenta,red)] flex items-center justify-center">
          <div class="size-[121px] rounded-full border border-[#aaa] bg-[#e8e8e8] flex items-center justify-center"><div class="relative size-[79px] border border-[#999] bg-[linear-gradient(to_right,#808080,#0090ff_60%)]"><div class="absolute inset-0 bg-[linear-gradient(to_bottom,#fff,transparent_50%,#000)]"></div></div></div>
          <span class="absolute left-[7px] top-[38px] size-3 rounded-full border-2 border-white"></span>
          <span class="absolute left-[67px] top-[48px] size-3 rounded-full border-2 border-white bg-[#a3c5df]"></span>
        </div>
        <div class="absolute right-2.5 top-[28px] grid grid-cols-2 border-t border-l border-[#999]">
          <span class="size-3.5 bg-black border-r border-b border-[#999]"></span><span class="size-3.5 bg-white border-r border-b border-[#999]"></span>
          <span class="size-3.5 bg-[#a3c5df] border-r border-b border-[#999]"></span><span class="size-3.5 bg-[#d19797] border-r border-b border-[#999]"></span>
          <span class="size-3.5 bg-[#f0f0f0] border-r border-b border-[#999]"></span>
        </div>
        <div class="absolute left-2.5 bottom-[7px] right-3.5">
          <div class="flex items-end">
            <div class="leading-[13px] text-[10px] pb-1"><p>H: 206</p><p class="pl-0.5">S: 49</p><p class="pl-0.5">L: 76</p></div>
            <label class="ml-auto -mr-1 mb-1 flex items-center gap-0.5">#:<input value="A3C5DF" class="w-[50px] h-5 bg-white rounded-xs pl-0.5"></label>
          </div>
          <p class="text-[10px] leading-3 pl-1">Opacity</p>
          <div class="flex items-center h-5 pl-2 mt-0.5">
            <span class="size-3.5 rounded-full bg-[#a3c5df] border border-[#888]"></span>
            <input aria-label="Opacity" type="range" value="100" class="ml-2 mr-1 flex-1 min-w-0 appearance-none h-2 rounded-full bg-[linear-gradient(to_right,transparent,#222),repeating-conic-gradient(#d8d8d8_0_25%,#f4f4f4_0_50%)] bg-[length:100%_100%,8px_8px] [&::-webkit-slider-thumb]:appearance-none [&::-webkit-slider-thumb]:size-3 [&::-webkit-slider-thumb]:rounded-full [&::-webkit-slider-thumb]:bg-[#333] [&::-webkit-slider-thumb]:border-2 [&::-webkit-slider-thumb]:border-white [&::-webkit-slider-thumb]:shadow-[0_0_0_1px_#555]">
            <div class="relative w-[60px]"><select aria-label="Opacity value" class="appearance-none w-full h-5 bg-white rounded-xs pl-1.5"><option>100 %</option></select><svg class="absolute right-1 top-1.5 size-2 pointer-events-none"><use href="#chev"/></svg></div>
          </div>
        </div>
      </div>

      <div class="h-[30px] shrink-0 bg-[#bebebe] flex items-center text-[10px] text-[#555] [&>button]:pb-0.5 [&>span]:pb-0.5">
        <svg class="w-[5px] h-2 ml-[7px] mr-1.5"><use href="#grip"/></svg>
        <button class="self-end h-7 px-[5px] mr-[5px] bg-[#e8e8e8] text-black">Layers</button>
        <button>Quick FX</button><span class="mx-[5px] text-[#888]">|</span><button>Styles</button>
        <button aria-label="Panel menu" class="ml-auto mr-[7px]"><svg class="w-3 h-[11px]"><use href="#menu"/></svg></button>
      </div>
      <div class="h-[29px] shrink-0 bg-[#e8e8e8] flex items-center pl-2 pr-2 text-[#888]">
        <span class="w-10 text-[10px]">Opacity:</span>
        <div class="relative w-[55px]"><select aria-label="Layer opacity" class="appearance-none w-full h-5 border border-[#a8a8a8] rounded-xs pl-1"><option>100 %</option></select><svg class="absolute right-0.5 top-1.5 size-2 pointer-events-none"><use href="#chev"/></svg></div>
        <div class="relative flex-1 ml-1 mr-1.5"><select aria-label="Blend mode" class="appearance-none w-full h-5 border border-[#a8a8a8] rounded-xs pl-1"><option>Normal</option></select><svg class="absolute right-1 top-1.5 size-2 pointer-events-none"><use href="#chev"/></svg></div>
        <button aria-label="Blend options"><svg class="size-3" viewBox="0 0 12 12"><circle cx="6" cy="6" r="3" fill="none" stroke="#444" stroke-width="2.200"/><circle cx="6" cy="6" r="4.800" fill="none" stroke="#444" stroke-width="1.800" stroke-dasharray="2 1.770"/></svg></button>
        <button aria-label="Lock" class="ml-2.5"><svg class="w-3 h-3.5" viewBox="0 0 12 14"><rect x="2" y="6" width="8" height="7" rx="1" fill="#444"/><path d="M3.500 4V3.500a2.500 2.500 0 0 1 5 0V7" fill="none" stroke="#888" stroke-width="1.200"/></svg></button>
      </div>
      <div class="flex-1 min-h-0 bg-[#bfbfbf] pl-px pr-[19px] pt-px text-[19px]">
        <div class="h-[38px] border border-[#969696] bg-[#a9bfd8] flex items-center">
          <div class="w-4 h-full bg-[#cbcbcb] flex flex-col items-center justify-center gap-1"><svg class="size-2.5" viewBox="0 0 10 10"><path d="M3 0v10M7.500 0v10M0 2.500h10M0 7.500h10" stroke="#444" stroke-width="1.200"/></svg><svg class="size-2"><use href="#chev"/></svg></div>
          <div class="w-px h-full bg-[#969696]"></div>
          <div class="w-[37px] h-full border-2 border-[#eee] bg-[#cbcbcb] py-1"><div class="h-full bg-[#d19797]"></div></div>
          <span class="ml-1 mt-0.5 leading-7">Artboard1</span>
          <span class="ml-auto mr-2.5 size-2.5 rounded-full bg-[#555]"></span>
        </div>
        <div class="h-[37px] border border-t-0 border-[#969696] bg-[#cbcbcb] flex items-center text-[#888]">
          <div class="w-2 h-full border-r border-[#969696]"></div>
          <div class="w-4 flex justify-center"><svg class="w-2.5 h-3" viewBox="0 0 10 12" fill="#444"><path d="M0 0h4v4H0zM7.500 2l2.500 3.500H5z"/><circle cx="2" cy="9" r="2"/><circle cx="8" cy="10" r="2"/></svg></div>
          <div class="w-px h-full bg-[#969696]"></div>
          <div class="w-[37px] h-full border-2 border-[#eee] py-1"><div class="h-full bg-[#d19797]"></div></div>
          <span class="ml-1 mt-0.5 leading-7">Rectangle</span>
          <span class="ml-auto mr-2.5 size-2.5 rounded-full bg-[#555]"></span>
        </div>
      </div>
      <div class="h-[26px] shrink-0 bg-[#e8e8e8] flex items-center pl-[5px] pr-1.5">
        <button aria-label="Layer stack" class="w-[21px] h-5 bg-[#cbcbcb] flex items-center justify-center"><svg class="size-4" viewBox="0 0 16 16" fill="none" stroke="#555" stroke-width="1.400"><rect x="1" y="1" width="9" height="9"/><path d="M12.500 4v8.500H4M15 7v8H7"/></svg></button>
        <div class="ml-auto flex items-center gap-1">
          <button aria-label="Mask"><svg class="size-4" viewBox="0 0 16 16"><rect x="1" y="2" width="14" height="12" fill="#444"/><circle cx="8" cy="8" r="3" fill="#fff"/></svg></button>
          <button aria-label="Adjustment"><svg class="size-4" viewBox="0 0 16 16"><circle cx="8" cy="8" r="7.200" fill="none" stroke="#444" stroke-width="1.200"/><path d="M12.500 4.500a6 6 0 0 1-8 8z" fill="#444"/></svg></button>
          <button aria-label="Effects"><svg class="size-4" viewBox="0 0 16 16" fill="none" stroke="#444"><path d="M2 .7h13M2 15.300h13" stroke-width="1.200"/><path d="M3 13V4h4M3 8h3.500M7.500 4l6.500 9M14 4l-6.500 9" stroke-width="2"/></svg></button>
          <button aria-label="Live filter" class="ml-0.5"><svg class="size-4" viewBox="0 0 16 16" fill="none" stroke="#777" stroke-width="1.200"><path d="M5 1h7c1 5 1 9 3 11l-5 3H1c3-3 3-9 4-14zM4 6h9M2.500 11h11M8 1c0 5-1 9-2 14M11 1c0 5 0 9-1 13"/></svg></button>
          <button aria-label="Add layer" class="ml-[22px]"><svg class="size-4" viewBox="0 0 16 16" fill="none" stroke="#444" stroke-width="1.300"><path d="M9 1.500H2v13.500h11V7M4 6h5M4 9h7M4 12h7M13 0v6M10 3h6"/></svg></button>
          <button aria-label="Add pixel layer"><svg class="size-4" viewBox="0 0 16 16"><rect x="2" y="1" width="12" height="14" fill="none" stroke="#444" stroke-width="1.300"/><path d="M4 3h2v2H4zM10 3h2v2h-2zM6 5h2v2H6zM8 7h2v2H8zM6 9h2v2H6zM4 11h2v2H4zM10 11h2v2h-2zM10 5h-2v2h2zM4 7h2v2H4z" fill="#444"/></svg></button>
          <button aria-label="Delete"><svg class="size-4" viewBox="0 0 16 16" fill="none" stroke="#444" stroke-width="1.200"><path d="M2 3.500h12M6 3.500V1h4v2.500M3.500 3.500V15h9V3.500M6.500 6v7M9.500 6v7"/></svg></button>
        </div>
      </div>

      <div class="h-[30px] shrink-0 bg-[#bebebe] flex items-center text-[10px] text-[#555] [&>button]:pb-0.5 [&>span]:pb-0.5">
        <svg class="w-[5px] h-2 ml-[7px] mr-1.5"><use href="#grip"/></svg>
        <button class="self-end h-7 px-[5px] mr-1 bg-[#e8e8e8] text-black">Transform</button>
        <button>Isometric</button><span class="mx-1 text-[#888]">|</span><button>Constraints</button><span class="mx-1 text-[#888]">|</span><button>Navigator</button><span class="mx-1 text-[#888]">|</span><button>History</button>
        <button aria-label="Panel menu" class="ml-auto mr-[7px]"><svg class="w-3 h-[11px]"><use href="#menu"/></svg></button>
      </div>
      <div class="h-[130px] shrink-0 bg-[#e8e8e8] pt-3 pl-[17px] flex items-start text-[#888]">
        <svg class="size-9 mt-[22px]"><use href="#anchor"/></svg>
        <div class="ml-3">
          <div class="grid grid-cols-[14px_65px_24px_65px] gap-x-1 gap-y-1 items-center text-right">
            <label for="tx">X:</label><input id="tx" value="0 px" class="w-[65px] h-5 border border-[#a8a8a8] rounded-xs pl-1"><label for="tw">W:</label><input id="tw" value="0 px" class="w-[65px] h-5 border border-[#a8a8a8] rounded-xs pl-1">
            <label for="ty">Y:</label><input id="ty" value="0 px" class="w-[65px] h-5 border border-[#a8a8a8] rounded-xs pl-1"><label for="th">H:</label><input id="th" value="0 px" class="w-[65px] h-5 border border-[#a8a8a8] rounded-xs pl-1">
            <label for="tr" class="mt-1.5">R:</label><div class="relative mt-1.5"><select id="tr" class="appearance-none w-full h-5 border border-[#a8a8a8] rounded-xs pl-1"><option>0 °</option></select><svg class="absolute right-0.5 top-1.5 size-2 pointer-events-none"><use href="#chev"/></svg></div><label for="ts" class="mt-1.5">S:</label><div class="relative mt-1.5"><select id="ts" class="appearance-none w-full h-5 border border-[#a8a8a8] rounded-xs pl-1"><option>0 °</option></select><svg class="absolute right-0.5 top-1.5 size-2 pointer-events-none"><use href="#chev"/></svg></div>
          </div>
          <div class="flex justify-end mt-2 gap-px text-black"><button aria-label="Scale with bounds" class="w-[30px] h-[26px] bg-[#f8f8f8] flex items-center justify-center"><svg class="size-4" viewBox="0 0 16 16"><path d="M1 5V1h14v14h-4" fill="none" stroke="#444" stroke-width="1.300" stroke-dasharray="4 1.500"/><rect x="0" y="7" width="9" height="9" rx="2" fill="#555"/></svg></button><button aria-label="Bounds options" class="w-3.5 h-[26px] bg-[#f8f8f8] flex items-center justify-center"><svg class="size-2"><use href="#chev"/></svg></button></div>
        </div>
        <svg class="w-2.5 h-[22px] ml-2.5 mt-3 text-[#555]"><use href="#link"/></svg>
      </div>
    </aside>
  </main>

  <!-- Status bar -->
  <footer class="h-[21px] shrink-0 overflow-hidden pl-[23px] text-[19px] leading-7"><b class="font-semibold text-black">Drag</b> to marquee select. <b class="font-semibold text-black">Click</b> an object to select it.</footer>
</body>
</html>
